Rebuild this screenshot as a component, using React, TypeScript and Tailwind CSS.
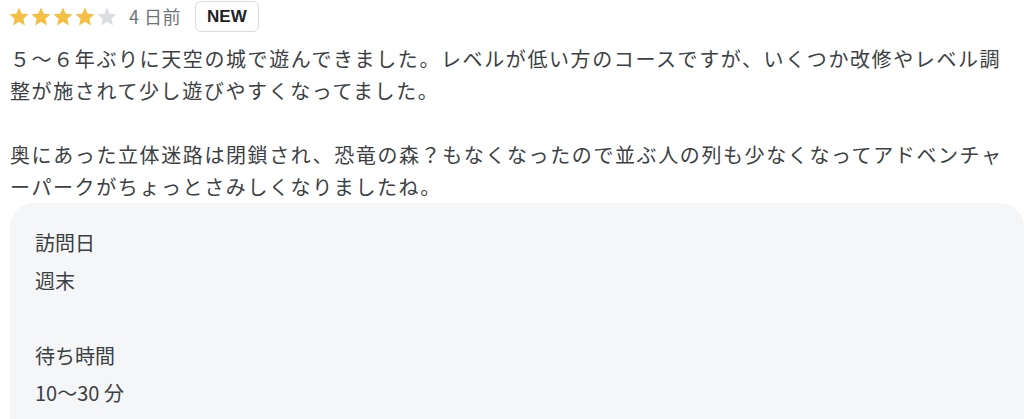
import React from 'react'

const font = { fontFamily: '"Noto Sans CJK JP", "Noto Sans", sans-serif' }

function Star({ filled }: { filled: boolean }) {
  return (
    <svg viewBox="1.5 1.8 21 21" className="w-[20px] h-[20px]">
      <path
        d="M12 2.2l2.9 6.6 7.1.6-5.4 4.7 1.6 7-6.2-3.7-6.2 3.7 1.6-7L2 9.4l7.1-.6z"
        fill={filled ? '#f4bf42' : '#dcdde0'}
      />
    </svg>
  )
}

export default function App() {
  const rating = 4
  return (
    <div className="bg-white w-[1024px] h-[419px] overflow-hidden pl-[10px] pt-px text-[#3c4043]" style={font}>
      <div className="flex items-center h-[31px]">
        <div className="flex items-center gap-[2px] -ml-[1px]">
          {[0, 1, 2, 3, 4].map((i) => (
            <Star key={i} filled={i < rating} />
          ))}
        </div>
        <span className="ml-[12px] text-[18px] text-[#70757a] tracking-[0.5px]">4 日前</span>
        <span className="ml-[14px] h-[31px] px-[11px] flex items-center border border-[#dadce0] rounded-[6px] text-[17px] font-bold text-[#202124]" style={{ fontFamily: '"Liberation Sans", Arial, sans-serif' }}>
          NEW
        </span>
      </div>

      <div className="mt-[11px] pr-[20px] text-[20px] leading-[32px] tracking-[1.6px]">
        <p>５～６年ぶりに天空の城で遊んできました。レベルが低い方のコースですが、いくつか改修やレベル調整が施されて少し遊びやすくなってました。</p>
        <p>&nbsp;</p>
        <p>奥にあった立体迷路は閉鎖され、恐竜の森？もなくなったので並ぶ人の列も少なくなってアドベンチャーパークがちょっとさみしくなりましたね。</p>
      </div>

      <div className="bg-[#f5f6f8] rounded-t-[24px] pl-[25px] pt-[21px] pb-6 text-[20px] leading-[37.5px]">
        <p>訪問日</p>
        <p>週末</p>
        <p>&nbsp;</p>
        <p>待ち時間</p>
        <p>10〜30 分</p>
      </div>
    </div>
  )
}
